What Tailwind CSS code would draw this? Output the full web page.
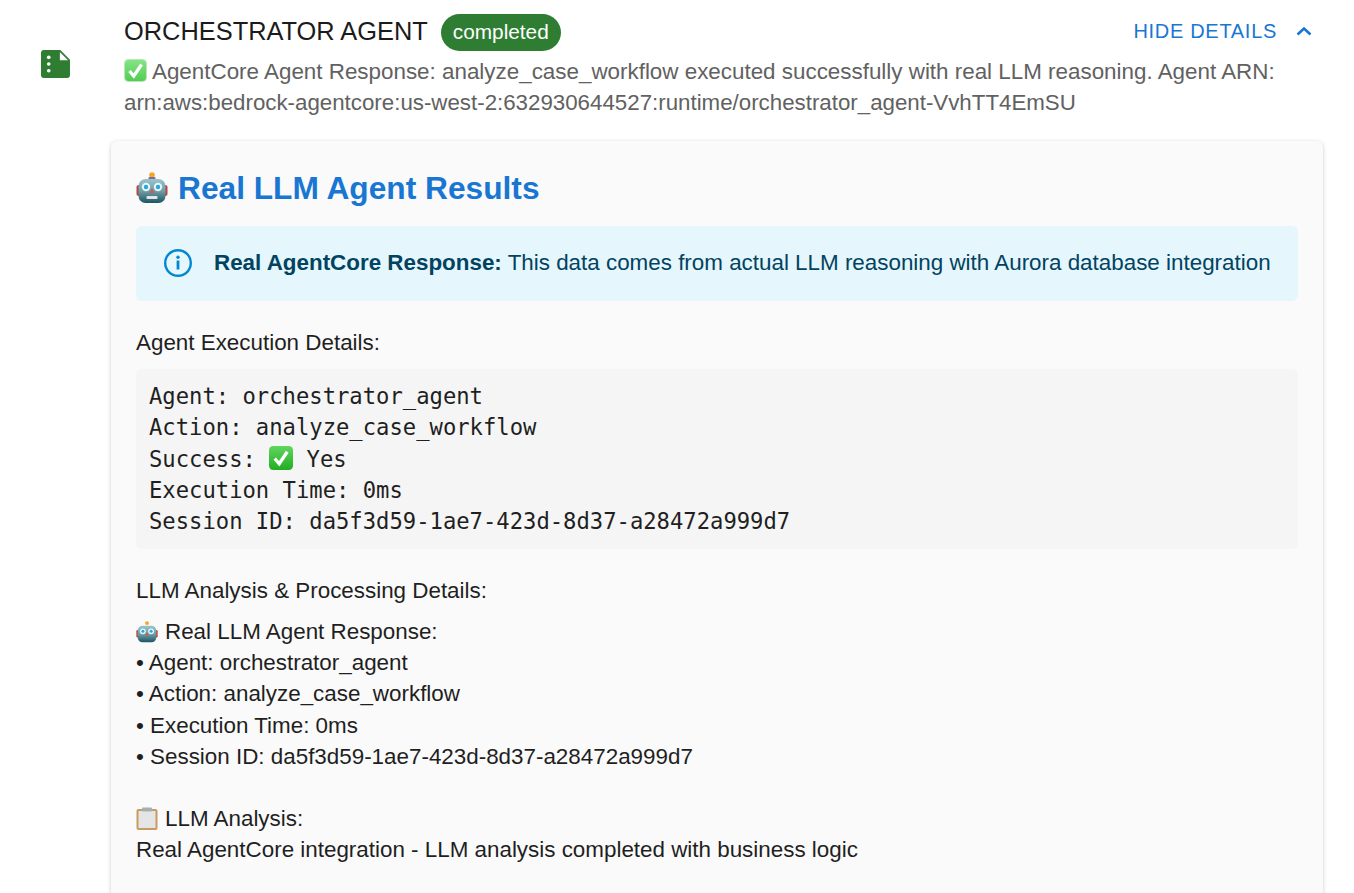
<!DOCTYPE html>
<html lang="en">

<head>
    <meta charset="UTF-8" />
    <meta name="viewport" content="width=device-width, initial-scale=1.0" />
    <title>Orchestrator Agent</title>
    <script src="https://cdn.jsdelivr.net/npm/@tailwindcss/browser@4"></script>
</head>

<body class="bg-white font-['Liberation_Sans',Arial,sans-serif] h-[893px] overflow-hidden text-[#1f1f1f]">
    <svg class="absolute w-0 h-0">
        <defs>
            <linearGradient id="robotHead" x1="0" y1="0" x2="0" y2="1">
                <stop offset="0" stop-color="#9cc3cb" />
                <stop offset="0.5" stop-color="#6f9ea8" />
                <stop offset="1" stop-color="#1c5561" />
            </linearGradient>
            <linearGradient id="checkGreen" x1="0" y1="0" x2="0" y2="1">
                <stop offset="0" stop-color="#86e486" />
                <stop offset="1" stop-color="#52cc52" />
            </linearGradient>
            <linearGradient id="checkDark" x1="0" y1="0" x2="0" y2="1">
                <stop offset="0" stop-color="#5fd65f" />
                <stop offset="1" stop-color="#22ad22" />
            </linearGradient>
        </defs>
    </svg>

    <div class="flex pl-[40px] pr-[31px]">
        <!-- step icon -->
        <div class="w-[84px] shrink-0 pt-[50px]">
            <svg class="w-[29px] h-[28px] block ml-[1px]" viewBox="0 0 30 29">
                <path fill="#2e7d32" d="M3 0H20L30 10V26a3 3 0 0 1-3 3H3a3 3 0 0 1-3-3V3A3 3 0 0 1 3 0Z" />
                <path fill="#fff" d="M19.500 2 28 10.500H19.500Z" />
                <circle cx="8" cy="7.500" r="1.900" fill="#fff" />
                <circle cx="8" cy="14.500" r="1.900" fill="#fff" />
                <circle cx="8" cy="21.500" r="1.900" fill="#fff" />
            </svg>
        </div>

        <div class="flex-1 min-w-0">
            <!-- header -->
            <div class="flex items-center justify-between pt-[10px] h-[52px] pr-[11px]">
                <div class="flex items-center">
                    <span class="text-[25.400px] leading-[36px] text-[#1b1b1b]">ORCHESTRATOR AGENT</span>
                    <span class="ml-[13px] mt-[2px] h-[37px] w-[120px] rounded-full bg-[#2e7d32] text-white text-[20.800px] flex items-center justify-center">completed</span>
                </div>
                <div class="flex items-center text-[#1976d2]">
                    <span class="text-[20px] tracking-[0.7px]">HIDE DETAILS</span>
                    <svg class="w-[16px] h-[10px] ml-[19px]" viewBox="0 0 16 10" fill="none" stroke="#1976d2" stroke-width="2.600">
                        <path d="M1.500 8.500 8 2.500l6.500 6" />
                    </svg>
                </div>
            </div>

            <!-- summary -->
            <p class="text-[22.400px] leading-[31px] text-[#616161] mt-[4px] whitespace-nowrap">
                <svg class="inline-block w-[23px] h-[23px] align-[-3px]" viewBox="0 0 23 23">
                    <rect x="0.500" y="0.500" width="22" height="22" rx="4" fill="url(#checkGreen)" stroke="#b9e6b9" />
                    <path d="M5.500 12 9.800 17 17.500 5.500" fill="none" stroke="#fff" stroke-width="3.200" />
                </svg>
                AgentCore Agent Response: analyze_case_workflow executed successfully with real LLM reasoning. Agent ARN:<br /><span class="text-[22.300px]">arn:aws:bedrock-agentcore:us-west-2:632930644527:runtime/orchestrator_agent-VvhTT4EmSU</span>
            </p>

            <!-- results card -->
            <div class="-ml-[13px] mt-[23px] bg-[#fafafa] rounded-[6px] shadow-[0_1px_4px_rgba(0,0,0,0.2)] px-[25px] pt-[26px] h-[800px]">
                <h2 class="flex items-center text-[31.700px] leading-[42px] font-bold text-[#1976d2]">
                    <svg class="w-[32px] h-[32px] mr-[10px]" viewBox="0 0 32 32">
                        <circle cx="16" cy="3" r="2.800" fill="#f5a623" />
                        <rect x="12.500" y="5" width="7" height="3" rx="1" fill="#7a6fa8" />
                        <rect x="0.500" y="13" width="4" height="11" rx="2" fill="#b5483c" />
                        <rect x="27.500" y="13" width="4" height="11" rx="2" fill="#b5483c" />
                        <rect x="2.500" y="7" width="27" height="24" rx="7" fill="url(#robotHead)" />
                        <circle cx="10" cy="15" r="4.200" fill="#e4f8fc" />
                        <circle cx="22" cy="15" r="4.200" fill="#e4f8fc" />
                        <circle cx="10" cy="15" r="2.200" fill="#2aa7d6" />
                        <circle cx="22" cy="15" r="2.200" fill="#2aa7d6" />
                        <path d="M16 16l2.300 5h-4.600Z" fill="#d9534f" />
                        <rect x="10.500" y="24" width="11" height="3" rx="1" fill="#dfe7e8" />
                    </svg>
                    Real LLM Agent Results
                </h2>

                <!-- info alert -->
                <div class="mt-[17px] h-[75px] bg-[#e5f6fd] rounded-[6px] flex items-center pl-[27px] pb-[1px] text-[22.400px] text-[#014361]">
                    <svg class="w-[30px] h-[30px] mr-[21px] shrink-0" viewBox="0 0 30 30" fill="none">
                        <circle cx="15" cy="15" r="12.800" stroke="#0288d1" stroke-width="2.400" />
                        <circle cx="15" cy="9.300" r="1.700" fill="#0288d1" />
                        <rect x="13.600" y="12.500" width="2.800" height="9" fill="#0288d1" />
                    </svg>
                    <span><strong>Real AgentCore Response:</strong> This data comes from actual LLM reasoning with Aurora database integration</span>
                </div>

                <p class="mt-[26px] text-[22.400px] leading-[31px]">Agent Execution Details:</p>

                <pre class="mt-[11px] bg-[#f5f5f5] rounded-[6px] px-[13px] py-[12px] font-['DejaVu_Sans_Mono',monospace] text-[22.200px] leading-[31.300px] text-[#1f1f1f]">Agent: orchestrator_agent
Action: analyze_case_workflow
Success: <svg class="inline-block w-[24px] h-[24px] align-[-3px]" viewBox="0 0 23 23"><rect width="23" height="23" rx="4" fill="url(#checkDark)" /><path d="M5.500 12 9.800 17 17.500 5.500" fill="none" stroke="#fff" stroke-width="3.200" /></svg> Yes
Execution Time: 0ms
Session ID: da5f3d59-1ae7-423d-8d37-a28472a999d7</pre>

                <p class="mt-[26px] text-[22.400px] leading-[31px]">LLM Analysis &amp; Processing Details:</p>

                <div class="mt-[9.500px] text-[22.400px] leading-[31.200px]">
                    <div class="flex items-center">
                        <svg class="w-[22px] h-[22px] mr-[7px]" viewBox="0 0 32 32">
                            <circle cx="16" cy="3" r="2.800" fill="#f5a623" />
                            <rect x="0.500" y="13" width="4" height="11" rx="2" fill="#b5483c" />
                            <rect x="27.500" y="13" width="4" height="11" rx="2" fill="#b5483c" />
                            <rect x="2.500" y="7" width="27" height="24" rx="7" fill="url(#robotHead)" />
                            <circle cx="10" cy="15" r="4.200" fill="#e4f8fc" />
                            <circle cx="22" cy="15" r="4.200" fill="#e4f8fc" />
                            <circle cx="10" cy="15" r="2.200" fill="#2aa7d6" />
                            <circle cx="22" cy="15" r="2.200" fill="#2aa7d6" />
                            <path d="M16 16l2.300 5h-4.600Z" fill="#d9534f" />
                        </svg>
                        Real LLM Agent Response:
                    </div>
                    <div>• Agent: orchestrator_agent</div>
                    <div>• Action: analyze_case_workflow</div>
                    <div>• Execution Time: 0ms</div>
                    <div>• Session ID: da5f3d59-1ae7-423d-8d37-a28472a999d7</div>
                    <div class="h-[31.200px]"></div>
                    <div class="flex items-center">
                        <svg class="w-[22px] h-[23px] mr-[7px]" viewBox="0 0 22 23">
                            <rect x="0.500" y="2" width="21" height="21" rx="2" fill="#c99a62" />
                            <rect x="2.500" y="4" width="17" height="17" fill="#e4e6e6" />
                            <rect x="6" y="0.500" width="10" height="4" rx="1" fill="#a8adb0" />
                        </svg>
                        LLM Analysis:
                    </div>
                    <div>Real AgentCore integration - LLM analysis completed with business logic</div>
                </div>
            </div>
        </div>
    </div>
</body>

</html>
